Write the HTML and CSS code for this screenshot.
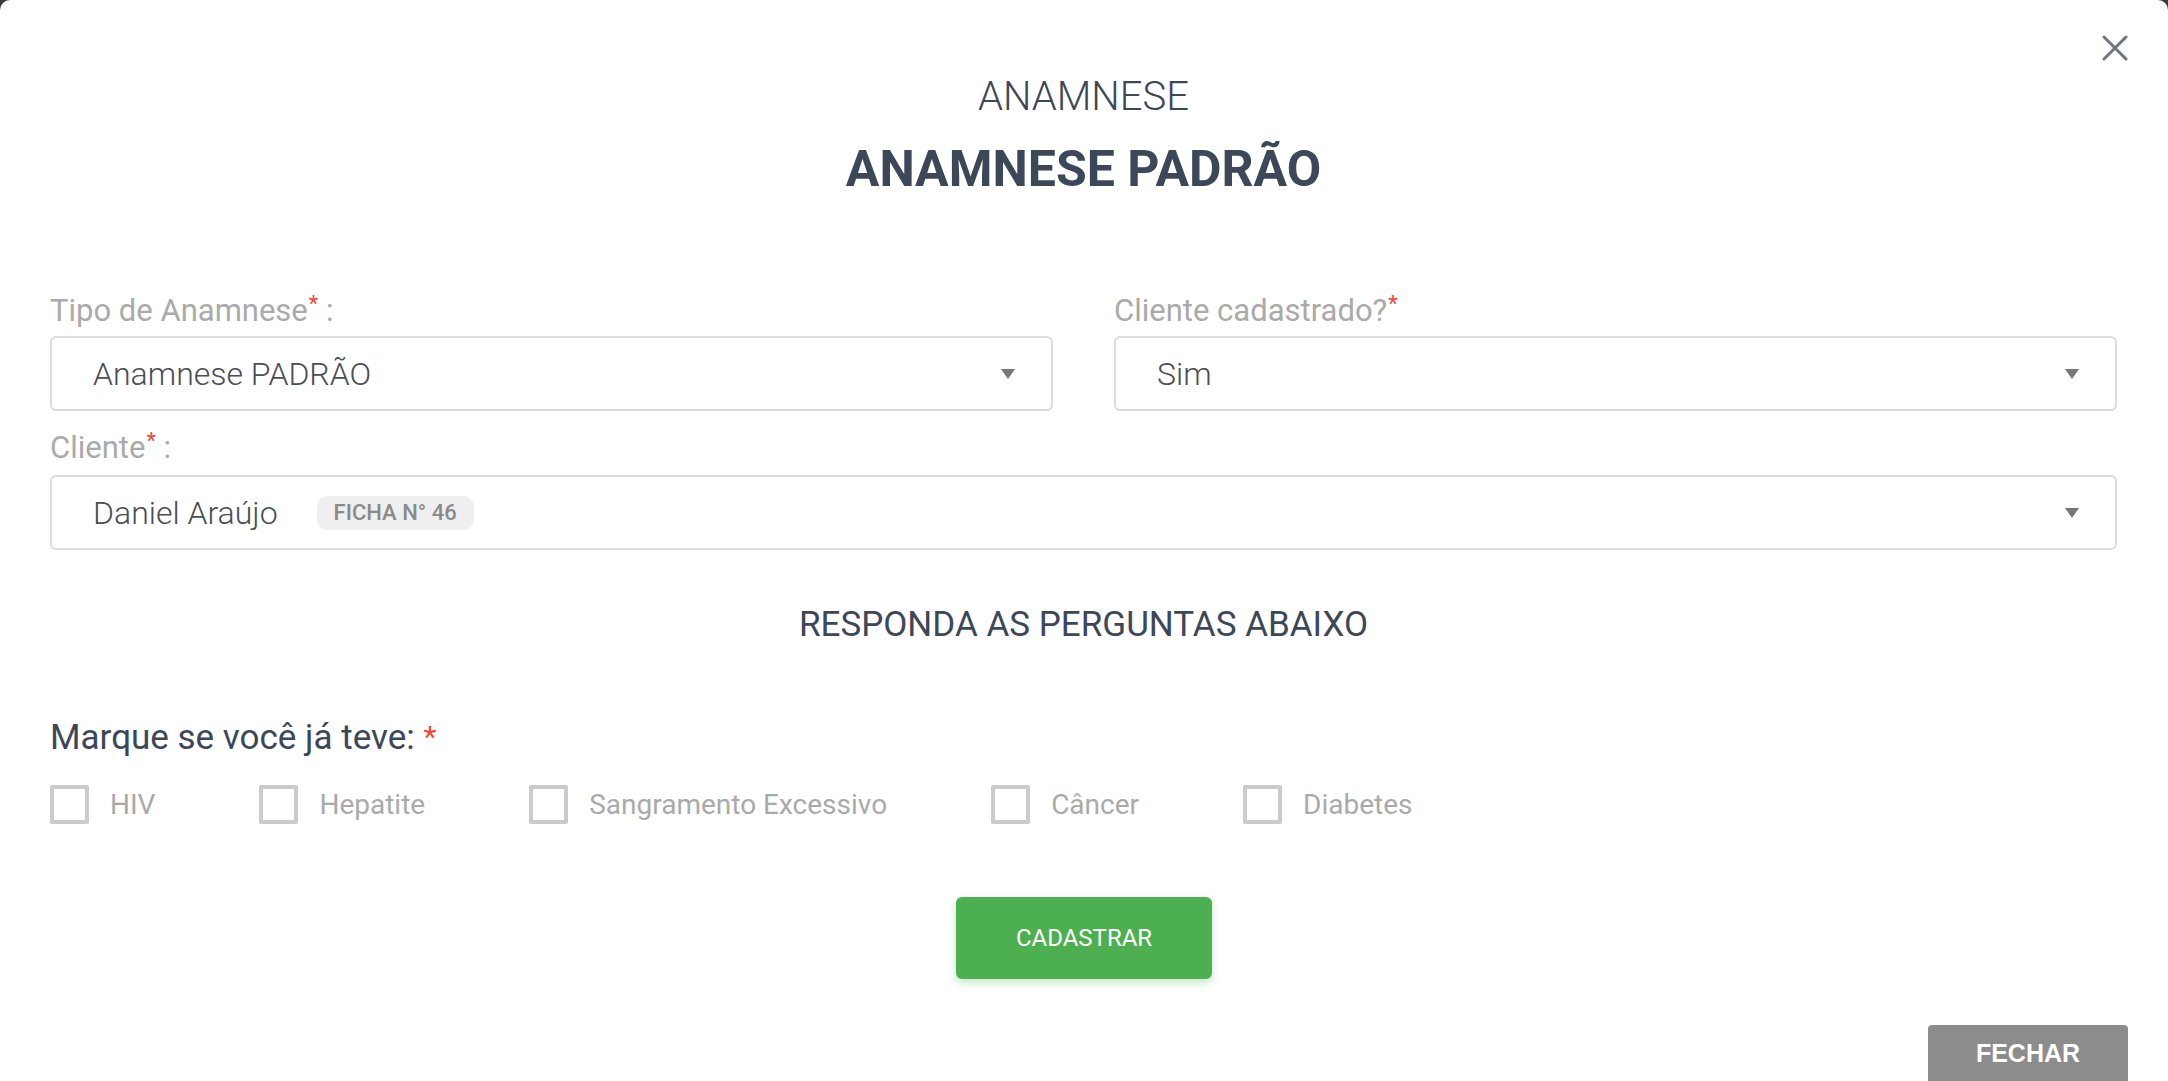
FILE: index.html
```html
<!DOCTYPE html>
<html lang="pt-BR">
<head>
    <meta charset="UTF-8">
    <meta name="viewport" content="width=device-width, initial-scale=1.0">
    <title>Anamnese</title>
    <link rel="stylesheet" href="styles.css">
</head>
<body>
    <div class="modal">
        <button class="modal-close" type="button" aria-label="Fechar">
            <svg width="26" height="26" viewBox="0 0 26 26">
                <path d="M2 2 L24 24 M24 2 L2 24" stroke="#6b7583" stroke-width="3" stroke-linecap="round" fill="none"/>
            </svg>
        </button>

        <div class="modal-header">
            <h4 class="modal-subtitle">ANAMNESE</h4>
            <h2 class="modal-title">ANAMNESE PADRÃO</h2>
        </div>

        <form class="anamnese-form">
            <div class="form-row">
                <div class="form-group">
                    <label class="form-label">Tipo de Anamnese<sup class="required">*</sup> :</label>
                    <div class="select-box">
                        <span class="select-value">Anamnese PADRÃO</span>
                        <span class="select-arrow"></span>
                    </div>
                </div>
                <div class="form-group">
                    <label class="form-label">Cliente cadastrado?<sup class="required">*</sup></label>
                    <div class="select-box">
                        <span class="select-value">Sim</span>
                        <span class="select-arrow"></span>
                    </div>
                </div>
            </div>

            <div class="form-group form-group-client">
                <label class="form-label">Cliente<sup class="required">*</sup> :</label>
                <div class="select-box">
                    <span class="select-value">Daniel Araújo</span>
                    <span class="record-badge">FICHA N° 46</span>
                    <span class="select-arrow"></span>
                </div>
            </div>

            <h3 class="questions-title">RESPONDA AS PERGUNTAS ABAIXO</h3>

            <p class="question">Marque se você já teve: <span class="required-inline">*</span></p>
            <div class="check-list">
                <label class="check-item"><input type="checkbox"><span class="check-box"></span>HIV</label>
                <label class="check-item"><input type="checkbox"><span class="check-box"></span>Hepatite</label>
                <label class="check-item"><input type="checkbox"><span class="check-box"></span>Sangramento Excessivo</label>
                <label class="check-item"><input type="checkbox"><span class="check-box"></span>Câncer</label>
                <label class="check-item"><input type="checkbox"><span class="check-box"></span>Diabetes</label>
            </div>

            <div class="form-actions">
                <button type="button" class="btn-success">CADASTRAR</button>
            </div>
        </form>

        <div class="modal-footer">
            <button type="button" class="btn-close">FECHAR</button>
        </div>
    </div>
</body>
</html>
```

FILE: styles.css
```css
body {
    margin: 0;
    background-color: #3a3a3a;
    font-family: Roboto, "Noto Sans", sans-serif;
    overflow: hidden;
}
.modal {
    position: relative;
    box-sizing: border-box;
    height: 1140px;
    background: #fff;
    border-radius: 10px;
    padding: 74px 51px 0 50px;
}
.modal-close {
    position: absolute;
    top: 35px;
    right: 40px;
    width: 26px;
    height: 26px;
    padding: 0;
    border: none;
    background: none;
    cursor: pointer;
}
.modal-close svg {
    display: block;
}
.modal-header {
    text-align: center;
    color: #3c4858;
}
.modal-subtitle {
    margin: 0;
    font-size: 40px;
    line-height: 46px;
    font-weight: 300;
}
.modal-title {
    margin: 18px 0 0;
    font-size: 50px;
    line-height: 62px;
    font-weight: 700;
}
.anamnese-form {
    margin-top: 94px;
}
.form-row {
    display: grid;
    grid-template-columns: 1fr 1fr;
    grid-gap: 61px;
}
.form-label {
    display: block;
    margin-bottom: 8px;
    font-size: 31px;
    line-height: 34px;
    color: #aaa;
}
.required {
    color: #f44336;
    font-size: 22px;
    vertical-align: top;
    line-height: 20px;
    margin-left: 1px;
}
.form-group-client {
    margin-top: 20px;
}
.form-group-client .form-label {
    margin-bottom: 10px;
}
.select-box {
    display: flex;
    align-items: center;
    box-sizing: border-box;
    height: 75px;
    padding: 0 36px 0 41px;
    border: 2px solid #dcdcdc;
    border-radius: 6px;
}
.select-value {
    font-size: 32px;
    font-weight: 300;
    color: #4a4e55;
}
.record-badge {
    margin-left: 39px;
    padding: 5px 17px;
    font-size: 22px;
    font-weight: 500;
    line-height: 24px;
    color: #8a8a8a;
    background: #efefef;
    border-radius: 11px;
}
.select-arrow {
    margin-left: auto;
    width: 0;
    height: 0;
    border-left: 7px solid transparent;
    border-right: 7px solid transparent;
    border-top: 10px solid #777;
}
.questions-title {
    margin: 56px 0 0;
    text-align: center;
    font-size: 35px;
    line-height: 38px;
    font-weight: 400;
    color: #3c4858;
}
.question {
    margin: 74px 0 0;
    font-size: 35px;
    line-height: 38px;
    color: #3c4858;
}
.required-inline {
    color: #f44336;
    font-size: 30px;
    vertical-align: 2px;
}
.check-list {
    display: flex;
    margin-top: 28px;
    gap: 104px;
}
.check-item {
    display: flex;
    align-items: center;
    font-size: 28px;
    line-height: 39px;
    color: #aaa;
    cursor: pointer;
}
.check-item input {
    display: none;
}
.check-box {
    box-sizing: border-box;
    width: 39px;
    height: 39px;
    margin-right: 21px;
    border: 4px solid #cbcbcb;
    border-radius: 2px;
}
.form-actions {
    display: flex;
    justify-content: center;
    margin-top: 73px;
}
.btn-success {
    width: 256px;
    height: 82px;
    margin-left: 1px;
    border: none;
    border-radius: 6px;
    background-color: #4caf50;
    color: #fff;
    font-family: Roboto, sans-serif;
    font-size: 24px;
    box-shadow: 0 4px 8px rgba(76, 175, 80, 0.3);
    cursor: pointer;
}
.modal-footer {
    display: flex;
    justify-content: flex-end;
    margin-top: 46px;
    margin-right: -11px;
}
.btn-close {
    width: 200px;
    height: 70px;
    padding-bottom: 14px;
    border: none;
    border-radius: 4px;
    background-color: #8c8c8c;
    color: #fff;
    font-family: "Liberation Sans", Arial, sans-serif;
    font-weight: 700;
    font-size: 25px;
    cursor: pointer;
}
```
